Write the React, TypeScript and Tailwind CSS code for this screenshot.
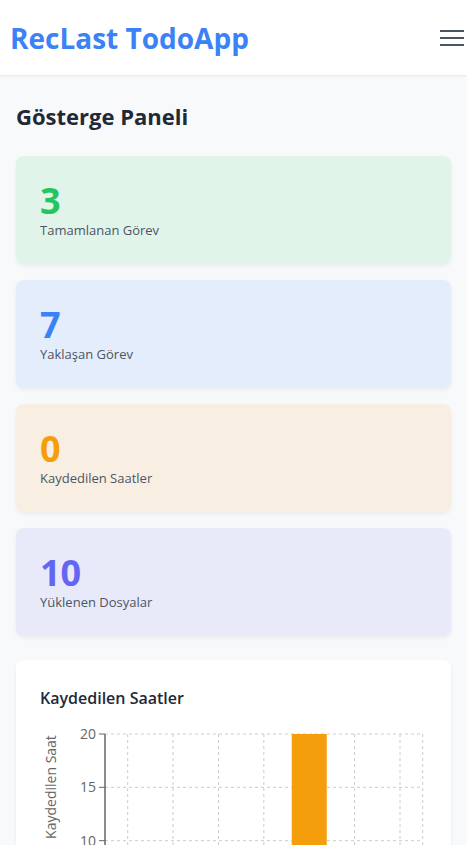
import React from "react";

const stats = [
	{ value: 3, label: "Tamamlanan Görev", bg: "bg-[#e0f4ea]", color: "text-[#22c55e]" },
	{ value: 7, label: "Yaklaşan Görev", bg: "bg-[#e3edfb]", color: "text-[#3b82f6]" },
	{ value: 0, label: "Kaydedilen Saatler", bg: "bg-[#f8efe2]", color: "text-[#f59e0b]" },
	{ value: 10, label: "Yüklenen Dosyalar", bg: "bg-[#e8e9f9]", color: "text-[#6366f1]" },
];

const hours = [0, 0, 0, 0, 20, 0, 0];

function HoursChart() {
	// plot area
	const left = 65;
	const top = 9;
	const width = 317.7;
	const perUnit = 53.33 / 5;
	const max = 20;
	const height = max * perUnit;
	const step = width / hours.length;
	const ticks = [20, 15, 10, 5, 0];

	return (
		<svg width="395" height="260" className="block">
			<text
				x="0"
				y="0"
				transform="translate(16 62) rotate(-90)"
				textAnchor="middle"
				fontSize="14"
				fill="#666"
				fontFamily="'Open Sans', sans-serif"
			>
				Kaydedilen Saat
			</text>
			{ticks.map((t) => {
				const y = top + (max - t) * perUnit;
				return (
					<g key={t}>
						<line x1={left} x2={left + width} y1={y} y2={y} stroke="#ccc" strokeDasharray="3 3" />
						<line x1={left - 6} x2={left} y1={y} y2={y} stroke="#666" />
						<text
							x={left - 9}
							y={y + 5}
							textAnchor="end"
							fontSize="14"
							fill="#666"
							fontFamily="'Open Sans', sans-serif"
						>
							{t}
						</text>
					</g>
				);
			})}
			{hours.map((_, i) => {
				const x = left + step * (i + 0.5);
				return <line key={i} x1={x} x2={x} y1={top} y2={top + height} stroke="#ccc" strokeDasharray="3 3" />;
			})}
			<line x1={left + width} x2={left + width} y1={top} y2={top + height} stroke="#ccc" strokeDasharray="3 3" />
			{hours.map((h, i) => {
				if (h === 0) return null;
				const x = left + step * (i + 0.5) - 17.5;
				return <rect key={i} x={x} y={top + (max - h) * perUnit} width="35" height={h * perUnit} fill="#f59e0b" />;
			})}
			<line x1={left} x2={left} y1={top} y2={top + height} stroke="#666" strokeWidth="1.5" />
		</svg>
	);
}

export default function App() {
	return (
		<div className="min-h-screen bg-[#f8f9fb] font-['Open_Sans',sans-serif]">
			<header className="flex h-[75px] items-center justify-between bg-white pl-2.5 pr-[3px] shadow-[0_1px_3px_rgba(0,0,0,0.08)]">
				<div className="text-[28px] font-bold text-[#3b82f6]">RecLast TodoApp</div>
				<div className="flex w-6 flex-col gap-[5px]">
					<span className="h-[2px] w-6 bg-[#4b5563]" />
					<span className="h-[2px] w-6 bg-[#4b5563]" />
					<span className="h-[2px] w-6 bg-[#4b5563]" />
				</div>
			</header>
			<main className="px-4 pt-[25px] pb-8">
				<h1 className="mb-[24px] text-[22px] leading-8 font-bold text-[#1f2937]">Gösterge Paneli</h1>
				<div className="flex flex-col gap-4">
					{stats.map((s) => (
						<div
							key={s.label}
							className={`flex h-[108px] flex-col justify-center rounded-lg px-6 shadow-[0_2px_4px_rgba(0,0,0,0.06)] ${s.bg}`}
						>
							<div className={`text-[36px] leading-10 font-bold ${s.color}`}>{s.value}</div>
							<div className="text-[13px] leading-[18px] text-[#4b5563]">{s.label}</div>
						</div>
					))}
				</div>
				<div className="mt-6 rounded-lg bg-white p-6 shadow-[0_2px_4px_rgba(0,0,0,0.06)]">
					<h2 className="mb-[13px] text-base leading-7 font-semibold text-[#1f2937]">Kaydedilen Saatler</h2>
					<HoursChart />
				</div>
			</main>
		</div>
	);
}
